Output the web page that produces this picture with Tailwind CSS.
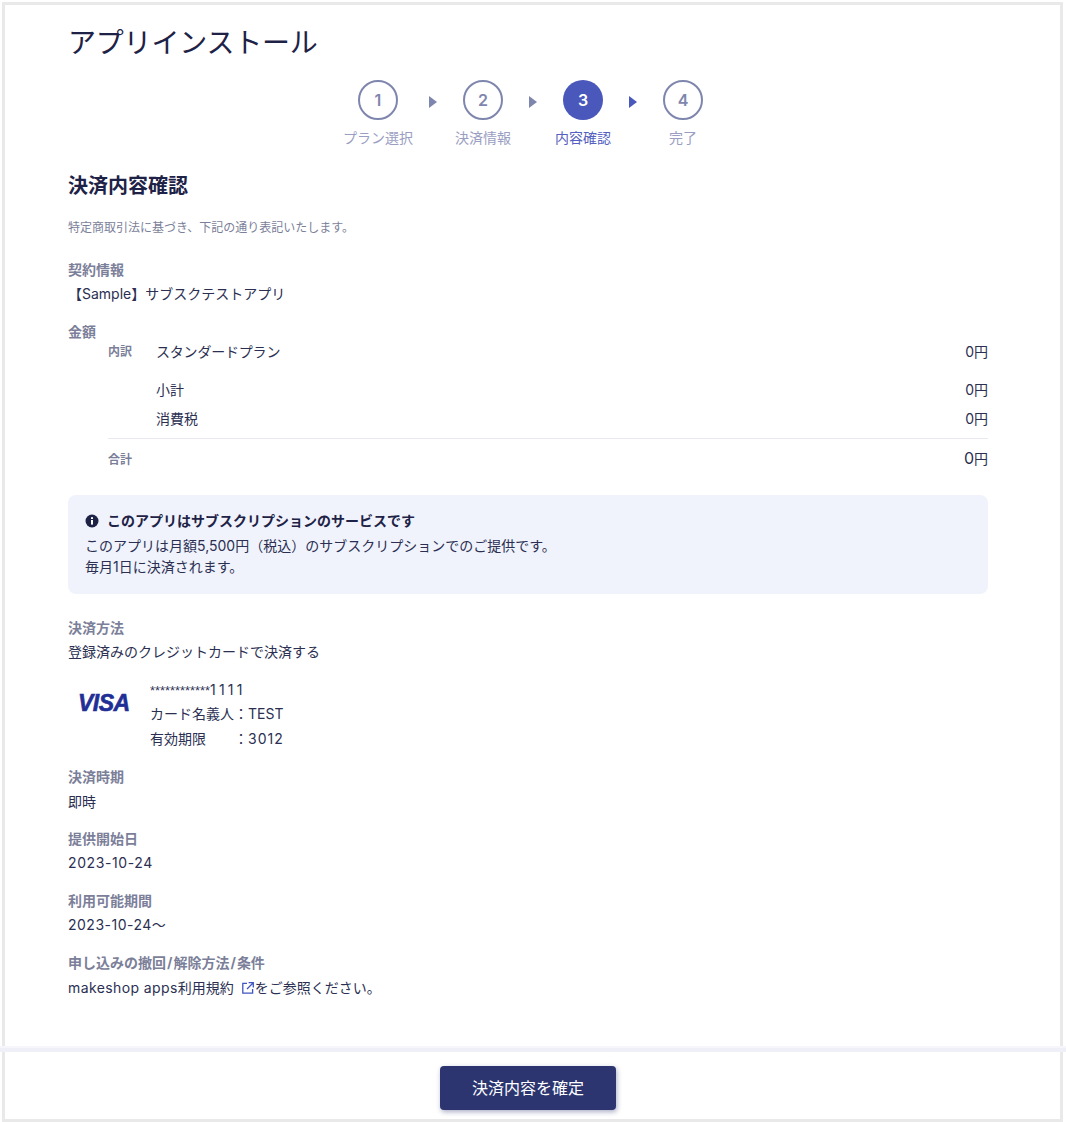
<!DOCTYPE html>
<html lang="ja">
<head>
    <meta charset="UTF-8">
    <meta name="viewport" content="width=device-width, initial-scale=1.0">
    <title>アプリインストール</title>
    <script src="https://cdn.jsdelivr.net/npm/@tailwindcss/browser@4"></script>
</head>
<body class="bg-white text-[#2b2f52] text-[14px] leading-5 font-['Inter','Noto_Sans_CJK_JP',sans-serif]">
    <div class="relative h-[1122px] w-[1066px] overflow-hidden p-[2px]">
        <div class="h-[1120px] w-[1061px] border-[3px] border-[#e9e9e9] pl-[63px] pr-[72px] pt-[18px]">
            <h1 class="text-[28px] leading-10 tracking-[-0.2px] text-[#1d2246]">アプリインストール</h1>

            <!-- ステップ -->
            <div class="mt-[17px] flex items-start pl-[275px]">
                <div class="flex w-[70px] flex-col items-center">
                    <div class="flex h-10 w-10 items-center justify-center rounded-full border-2 border-[#7f86ae] text-base font-semibold text-[#7f86ae]">1</div>
                    <p class="mt-2 whitespace-nowrap text-[#9a9ec2]">プラン選択</p>
                </div>
                <div class="ml-4 mr-[18px] mt-4 h-3 w-2 bg-[#7f86ae] [clip-path:polygon(0_0,100%_50%,0_100%)]"></div>
                <div class="flex w-14 flex-col items-center">
                    <div class="flex h-10 w-10 items-center justify-center rounded-full border-2 border-[#7f86ae] text-base font-semibold text-[#7f86ae]">2</div>
                    <p class="mt-2 whitespace-nowrap text-[#9a9ec2]">決済情報</p>
                </div>
                <div class="ml-[18px] mr-[18px] mt-4 h-3 w-2 bg-[#7f86ae] [clip-path:polygon(0_0,100%_50%,0_100%)]"></div>
                <div class="flex w-14 flex-col items-center">
                    <div class="flex h-10 w-10 items-center justify-center rounded-full bg-[#4a57bb] text-base font-semibold text-white">3</div>
                    <p class="mt-2 whitespace-nowrap text-[#5561c0]">内容確認</p>
                </div>
                <div class="ml-[18px] mr-[26px] mt-4 h-3 w-2 bg-[#4a57bb] [clip-path:polygon(0_0,100%_50%,0_100%)]"></div>
                <div class="flex w-10 flex-col items-center">
                    <div class="flex h-10 w-10 items-center justify-center rounded-full border-2 border-[#7f86ae] text-base font-semibold text-[#7f86ae]">4</div>
                    <p class="mt-2 whitespace-nowrap text-[#9a9ec2]">完了</p>
                </div>
            </div>

            <h2 class="mt-6 text-[20px] leading-7 font-bold text-[#1d2246]">決済内容確認</h2>
            <p class="mt-5 text-[12px] leading-4 text-[#7c7f99]">特定商取引法に基づき、下記の通り表記いたします。</p>

            <p class="mt-6 font-bold text-[#7c7f99]">契約情報</p>
            <p class="mt-1">【Sample】サブスクテストアプリ</p>

            <p class="mt-[18px] font-bold text-[#7c7f99]">金額</p>
            <div class="pl-10">
                <div class="flex h-5 items-center">
                    <span class="w-12 text-[12px] font-bold text-[#7c7f99]">内訳</span>
                    <span class="tracking-[-0.2px]">スタンダードプラン</span>
                    <span class="ml-auto">0円</span>
                </div>
                <div class="mt-[18px] flex h-5 items-center pl-12">
                    <span>小計</span>
                    <span class="ml-auto">0円</span>
                </div>
                <div class="mt-[9px] flex h-5 items-center pl-12">
                    <span>消費税</span>
                    <span class="ml-auto">0円</span>
                </div>
                <div class="mt-[9px] border-t border-[#e8e8f0]"></div>
                <div class="mt-[10px] flex h-5 items-center">
                    <span class="mt-[2px] text-[12px] font-bold text-[#7c7f99]">合計</span>
                    <span class="mb-[2px] ml-auto"><span class="text-[16px]">0</span>円</span>
                </div>
            </div>

            <div class="mt-[26px] rounded-lg bg-[#f0f3fc] pb-[17px] pl-[17px] pt-[15px] pr-4 leading-[21px]">
                <p class="flex items-center font-bold text-[#1d2246]">
                    <svg class="mr-2 mt-px h-[14px] w-[14px]" viewBox="0 0 14 14"><circle cx="7" cy="7" r="6.5" fill="#1d2246"/><rect x="6" y="6" width="2" height="4.6" fill="#fff"/><rect x="6" y="3.2" width="2" height="1.8" fill="#fff"/></svg>
                    このアプリはサブスクリプションのサービスです
                </p>
                <p class="mt-1">このアプリは月額5,500円（税込）のサブスクリプションでのご提供です。</p>
                <p>毎月1日に決済されます。</p>
            </div>

            <p class="mt-6 font-bold text-[#7c7f99]">決済方法</p>
            <p class="mt-1">登録済みのクレジットカードで決済する</p>

            <div class="mt-4 flex h-[73px] items-start">
                <span class="ml-[10px] mt-[13px] w-[72px] text-[23px] leading-6 font-bold italic tracking-[-0.5px] text-[#1f2f96] [-webkit-text-stroke:0.6px_#1f2f96] font-['Liberation_Sans',sans-serif]">VISA</span>
                <div>
                    <p class="h-6 leading-6"><span class="text-[12.85px] font-['Liberation_Sans',sans-serif]">************</span><span class="tracking-[3.2px]">1111</span></p>
                    <p class="h-6 leading-6">カード名義人：TEST</p>
                    <p class="mt-px h-6 leading-6">有効期限<span class="inline-block w-[28px]"></span>：<span class="tracking-[1px]">3012</span></p>
                </div>
            </div>

            <p class="mt-4 font-bold text-[#7c7f99]">決済時期</p>
            <p class="mt-[5px]">即時</p>
            <p class="mt-[17px] font-bold text-[#7c7f99]">提供開始日</p>
            <p class="mt-1 tracking-[0.6px]">2023-10-24</p>
            <p class="mt-[18px] font-bold text-[#7c7f99]">利用可能期間</p>
            <p class="mt-1 tracking-[0.5px]">2023-10-24〜</p>
            <p class="mt-[18px] font-bold text-[#7c7f99]">申し込みの撤回<span class="px-[1px]">/</span>解除方法<span class="px-[1px]">/</span>条件</p>
            <p class="mt-[5px] flex items-center"><span class="tracking-[0.4px]">makeshop apps</span>利用規約
                <svg class="ml-2 mr-px h-3 w-3" viewBox="0 0 12 12" fill="none" stroke="#3f56c0" stroke-width="1.3"><path d="M5 1.4H.8v9.8h9.8V7"/><path d="M6.6.7h4.7v4.7M11 1 5 7"/></svg>をご参照ください。
            </p>
        </div>

        <!-- 確定ボタン -->
        <div class="absolute bottom-0 left-0 h-[76px] w-full">
            <div class="h-[2px] bg-[#f6f6fb]"></div>
            <div class="h-1 bg-[#eeeff7]"></div>
            <div class="flex w-[1056px] justify-center pt-[14px]">
                <button class="h-11 w-[176px] rounded bg-[#2c3570] text-base text-white shadow-[1px_2px_5px_rgba(44,53,112,0.4)]">決済内容を確定</button>
            </div>
        </div>
    </div>
</body>
</html>
